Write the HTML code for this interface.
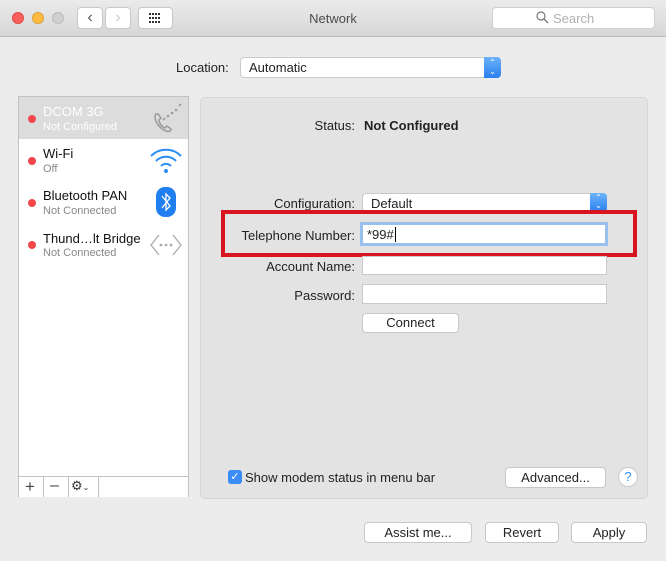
<!DOCTYPE html>
<html><head><style>
*{box-sizing:border-box;margin:0;padding:0}
body{width:666px;height:561px;background:#ececec;font-family:"Liberation Sans",sans-serif;font-size:13px;color:#222;position:relative;overflow:hidden}
.abs{position:absolute}
.tb{left:0;top:0;width:666px;height:37px;background:linear-gradient(#ebebeb,#d6d6d6);border-bottom:1px solid #b8b8b8}
.dot{width:12px;height:12px;border-radius:50%;top:12px}
.btn{background:#fff;border:1px solid #c8c8c8;border-radius:4px;text-align:center}
.field{background:#fff;border:1px solid #c9c9c9}
.lbl{text-align:right;width:200px}
.red{width:8px;height:8px;border-radius:50%;background:#f2474a}
.n{font-size:13px;color:#111}
.s{font-size:11px;color:#888}
</style></head><body>
<div class="abs tb"></div>
<div class="abs dot" style="left:12px;background:#fc605c;border:1px solid #de4a45"></div>
<div class="abs dot" style="left:32px;background:#fdbc40;border:1px solid #dea234"></div>
<div class="abs dot" style="left:52px;background:#d0d0d0;border:1px solid #bbb"></div>
<div class="abs btn" style="left:77px;top:7px;width:26px;height:22px;font-size:16px;line-height:19px;color:#555">&#8249;</div>
<div class="abs btn" style="left:105px;top:7px;width:26px;height:22px;font-size:16px;line-height:19px;color:#ccc">&#8250;</div>
<div class="abs btn" style="left:138px;top:7px;width:35px;height:22px">
<svg width="33" height="20" viewBox="0 0 33 20"><g fill="#333"><rect x="10" y="5" width="2" height="2"/><rect x="13" y="5" width="2" height="2"/><rect x="16" y="5" width="2" height="2"/><rect x="19" y="5" width="2" height="2"/><rect x="10" y="9" width="2" height="2"/><rect x="13" y="9" width="2" height="2"/><rect x="16" y="9" width="2" height="2"/><rect x="19" y="9" width="2" height="2"/><rect x="10" y="13" width="2" height="2"/><rect x="13" y="13" width="2" height="2"/><rect x="16" y="13" width="2" height="2"/><rect x="19" y="13" width="2" height="2"/></g></svg></div>
<div class="abs" style="left:0;width:666px;top:11px;text-align:center;color:#4d4d4d;font-size:13px">Network</div>
<div class="abs btn" style="left:492px;top:7px;width:163px;height:22px;border-color:#d0d0d0"></div>
<svg class="abs" style="left:536px;top:11px" width="13" height="13"><circle cx="5" cy="5" r="4" fill="none" stroke="#777" stroke-width="1.2"/><line x1="8" y1="8" x2="12" y2="12" stroke="#777" stroke-width="1.3"/></svg>
<div class="abs" style="left:553px;top:11px;color:#b0b0b0;font-size:13px">Search</div>

<div class="abs" style="left:176px;top:60px">Location:</div>
<div class="abs field" style="left:240px;top:57px;width:261px;height:21px;border-radius:4px;padding:2px 8px">Automatic</div>
<div class="abs" style="left:484px;top:57px;width:17px;height:21px;background:linear-gradient(#6cb3fa,#2a7ff0);border-radius:0 4px 4px 0;color:#fff;font-size:8px;line-height:9px;text-align:center;padding-top:1px">&#8963;<br>&#8964;</div>

<div class="abs" style="left:18px;top:96px;width:171px;height:401px;background:#fff;border:1px solid #c2c2c2"></div>
<div class="abs" style="left:19px;top:97px;width:169px;height:42px;background:#dcdcdc"></div>
<div class="abs red" style="left:28px;top:115px"></div>
<div class="abs" style="left:43px;top:104px;color:#fff;font-size:13px">DCOM 3G</div>
<div class="abs" style="left:43px;top:121px;color:#fff;font-size:11px">Not Configured</div>
<svg class="abs" style="left:150px;top:100px" width="34" height="36"><path d="M6 14c-3 4 2 14 10 17 3 1 5 0 5-2l-4-3-2 2c-3-1-6-5-6-8l2-2-3-4z" fill="none" stroke="#9a9a9a" stroke-width="1.5"/><g fill="#9a9a9a"><circle cx="18" cy="16" r="1.3"/><circle cx="22" cy="13" r="1.3"/><circle cx="26" cy="10" r="1.3"/></g><line x1="13" y1="20" x2="15" y2="18" stroke="#9a9a9a" stroke-width="1.6"/><line x1="29" y1="6" x2="31" y2="4" stroke="#9a9a9a" stroke-width="1.6"/></svg>

<div class="abs red" style="left:28px;top:157px"></div>
<div class="abs n" style="left:43px;top:146px">Wi-Fi</div>
<div class="abs s" style="left:43px;top:163px">Off</div>
<svg class="abs" style="left:149px;top:146px" width="34" height="30"><g fill="none" stroke="#2d8ff5" stroke-width="2"><path d="M2 10a21 21 0 0 1 30 0"/><path d="M7 15a14 14 0 0 1 20 0"/><path d="M12 20a7 7 0 0 1 10 0"/></g><circle cx="17" cy="25" r="2" fill="#2d8ff5"/></svg>

<div class="abs red" style="left:28px;top:199px"></div>
<div class="abs n" style="left:43px;top:188px">Bluetooth PAN</div>
<div class="abs s" style="left:43px;top:205px">Not Connected</div>
<svg class="abs" style="left:155px;top:186px" width="22" height="32"><rect x="1" y="1" width="20" height="30" rx="9" fill="#1f7ff0"/><path d="M7 10l8 10-4 4V8l4 4-8 10" fill="none" stroke="#fff" stroke-width="1.3"/></svg>

<div class="abs red" style="left:28px;top:241px"></div>
<div class="abs n" style="left:43px;top:231px">Thund…lt Bridge</div>
<div class="abs s" style="left:43px;top:247px">Not Connected</div>
<svg class="abs" style="left:149px;top:232px" width="34" height="26"><g fill="none" stroke="#aaa" stroke-width="1.3"><path d="M10 3L2 13l8 10"/><path d="M24 3l8 10-8 10"/></g><g fill="#aaa"><circle cx="12" cy="13" r="1.4"/><circle cx="17" cy="13" r="1.4"/><circle cx="22" cy="13" r="1.4"/></g></svg>

<div class="abs" style="left:19px;top:476px;width:169px;height:21px;border-top:1px solid #c2c2c2;background:#fff"></div>
<div class="abs" style="left:19px;top:477px;width:80px;height:20px;border-right:1px solid #c2c2c2"></div>
<div class="abs" style="left:43px;top:477px;width:1px;height:20px;background:#c2c2c2"></div>
<div class="abs" style="left:68px;top:477px;width:1px;height:20px;background:#c2c2c2"></div>
<div class="abs" style="left:25px;top:477px;font-size:17px;color:#444">+</div>
<div class="abs" style="left:50px;top:477px;font-size:16px;color:#444">&#8211;</div>
<div class="abs" style="left:71px;top:478px;font-size:13px;color:#333">&#9881;<span style="font-size:8px">&#8964;</span></div>

<div class="abs" style="left:200px;top:97px;width:448px;height:402px;background:#e3e3e3;border:1px solid #d6d6d6;border-radius:5px"></div>
<div class="abs lbl" style="left:155px;top:118px">Status:</div>
<div class="abs" style="left:364px;top:118px;font-weight:bold">Not Configured</div>

<div class="abs lbl" style="left:155px;top:196px">Configuration:</div>
<div class="abs field" style="left:362px;top:193px;width:245px;height:19px;border-radius:4px;padding:2px 8px">Default</div>
<div class="abs" style="left:590px;top:193px;width:17px;height:19px;background:linear-gradient(#6cb3fa,#2a7ff0);border-radius:0 4px 4px 0;color:#fff;font-size:8px;line-height:8px;text-align:center;padding-top:1px">&#8963;<br>&#8964;</div>

<div class="abs" style="left:221px;top:210px;width:416px;height:47px;border:4px solid #d7141f"></div>
<div class="abs lbl" style="left:155px;top:228px">Telephone Number:</div>
<div class="abs field" style="left:360px;top:222px;width:248px;height:24px;border:3px solid #97c0ee;padding:2px 4px">*99#<span style="border-left:1px solid #000;margin-left:1px"></span></div>

<div class="abs lbl" style="left:155px;top:259px">Account Name:</div>
<div class="abs field" style="left:362px;top:256px;width:245px;height:19px"></div>
<div class="abs lbl" style="left:155px;top:288px">Password:</div>
<div class="abs field" style="left:362px;top:284px;width:245px;height:20px"></div>
<div class="abs btn" style="left:362px;top:313px;width:97px;height:20px;line-height:18px">Connect</div>

<div class="abs" style="left:228px;top:470px;width:14px;height:14px;background:#3b8df5;border-radius:3px;color:#fff;font-size:11px;line-height:14px;text-align:center">&#10003;</div>
<div class="abs" style="left:245px;top:470px">Show modem status in menu bar</div>
<div class="abs btn" style="left:505px;top:467px;width:101px;height:21px;line-height:19px">Advanced...</div>
<div class="abs" style="left:618px;top:467px;width:20px;height:20px;border-radius:50%;background:#fff;border:1px solid #c8c8c8;color:#2d8ff5;text-align:center;line-height:18px;font-size:13px">?</div>

<div class="abs btn" style="left:364px;top:522px;width:108px;height:21px;line-height:19px">Assist me...</div>
<div class="abs btn" style="left:485px;top:522px;width:74px;height:21px;line-height:19px">Revert</div>
<div class="abs btn" style="left:571px;top:522px;width:76px;height:21px;line-height:19px">Apply</div>
</body></html>
